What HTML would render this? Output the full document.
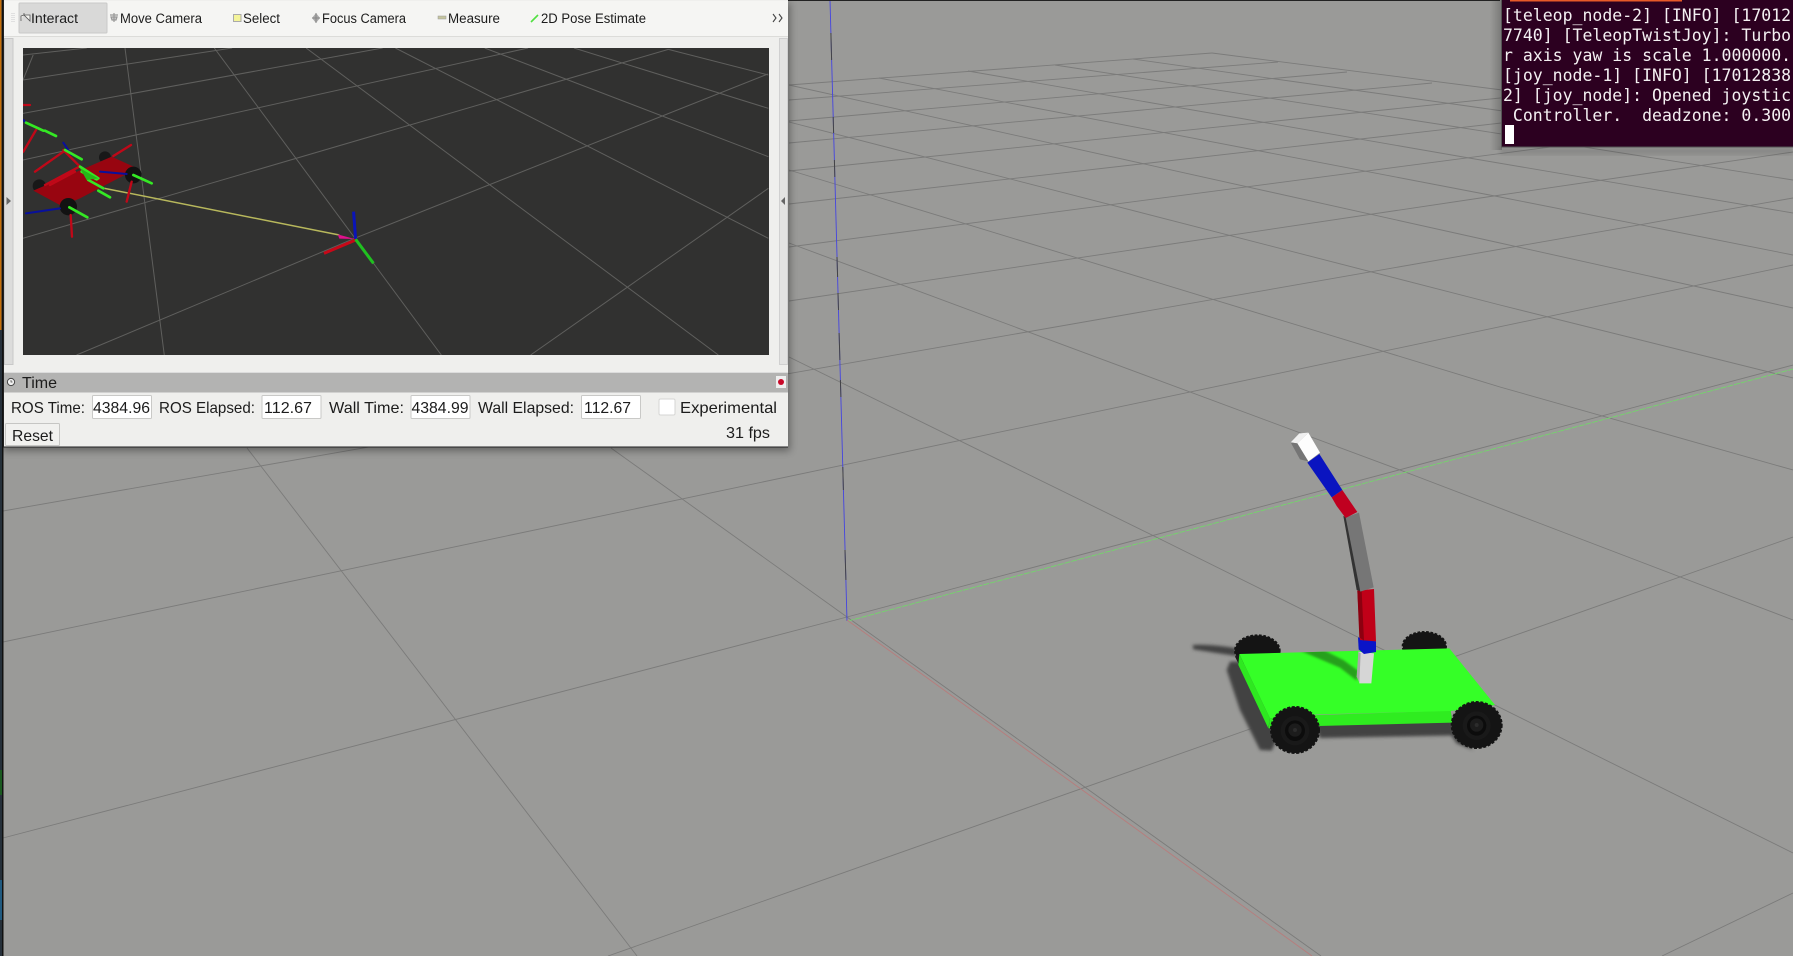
<!DOCTYPE html>
<html><head><meta charset="utf-8"><style>
html,body{margin:0;padding:0;background:#9a9a98;overflow:hidden}
svg{display:block;position:absolute;left:0;top:0}
.u{font-family:"Liberation Sans",sans-serif;fill:#1c1c1c}
.t{font-size:13.5px}.m{font-size:16px}
.c{font-family:"DejaVu Sans Mono","Liberation Mono",monospace;font-size:16.5px;fill:#f4f0f2}
</style></head><body>
<svg width="1793" height="956" viewBox="0 0 1793 956" xmlns="http://www.w3.org/2000/svg">
<defs>
<filter id="b3"><feGaussianBlur stdDeviation="5"/></filter>
<filter id="b1"><feGaussianBlur stdDeviation="2"/></filter>
<filter id="b05"><feGaussianBlur stdDeviation="3"/></filter>
<filter id="ws" x="-5%" y="-5%" width="110%" height="110%"><feGaussianBlur stdDeviation="4"/></filter>
<clipPath id="vp"><rect x="23" y="48" width="746" height="307"/></clipPath>
<clipPath id="green"><path d="M178 762L808 745L945 915L812 933L415 943L270 955Z"/></clipPath>
<linearGradient id="tsh" x1="0" x2="1" y1="0" y2="0"><stop offset="0" stop-color="#000" stop-opacity="0"/><stop offset="1" stop-color="#000" stop-opacity=".22"/></linearGradient>
</defs>
<rect width="1793" height="956" fill="#9a9a98"/>
<!-- ground grid -->
<g stroke="#7b7b7a" stroke-width=".9" fill="none">
<path d="M789 85L1212 53"/><path d="M789 100L1278 62"/><path d="M789 121L1347 72"/><path d="M789 143L1432 83"/>
<path d="M789 171L1510 97"/><path d="M789 204L1510 122"/><path d="M789 247L1550 147"/>
<path d="M789 301L1487 197L1793 152"/><path d="M3 511L1793 198"/><path d="M3 642L1793 265"/>
<path d="M3 838L847 617L1793 365"/><path d="M608 956L1793 537"/><path d="M1662 956L1793 893"/>
<path d="M1212 53L1510 91"/><path d="M1133 59L1510 112"/><path d="M1055 65L1457 127L1793 180"/>
<path d="M968 71L1469 158L1793 213"/><path d="M879 78L1500 197L1793 255"/><path d="M789 85L1500 243L1793 308"/>
<path d="M789 122L1500 305L1793 378"/><path d="M789 170L1500 387L1793 470"/><path d="M789 243L1400 470L1793 620"/>
<path d="M789 357L1154 536L1793 853"/><path d="M611 448L847 617L1321 956"/><path d="M247 448L637 956"/>
</g>
<!-- axes -->
<path d="M830 0L847 621" stroke="#4444e0" stroke-width=".9" fill="none"/>
<path d="M830.9 33L831.6 60M833.2 117L833.6 133M834.4 160L834.8 177M837 257L837.6 277M838 293L838.5 310M839.1 333L839.9 360M840.4 380L840.9 397M842.8 467L843.4 490M845 550L845.9 580" stroke="#444" stroke-width="1" fill="none"/>
<path d="M848 621L1793 369" stroke="#74d46c" stroke-width=".9" fill="none" stroke-dasharray="6 1"/>
<path d="M847 620L1312 956" stroke="#b87c7c" stroke-width=".9" fill="none"/>
<!-- robot -->
<g transform="translate(1180 400) scale(.33333)">
<g filter="url(#b3)" fill="#424242">
<path d="M38 735Q90 732 170 745L170 768Q90 756 40 748Z"/>
<path d="M150 785L260 785L300 1000L275 1052L240 1050L180 930L140 810Z"/>
<path d="M400 960L815 950L825 1006L420 1014Z"/>
<path d="M790 970L880 1050L830 1030Z"/>
</g>
<ellipse cx="232" cy="752" rx="67" ry="46" fill="#141414" stroke="#141414" stroke-width="6" stroke-dasharray="8 5"/>
<ellipse cx="733" cy="738" rx="65" ry="42" fill="#141414" stroke="#141414" stroke-width="6" stroke-dasharray="8 5"/>
<path d="M165 770L180 800L195 830L185 760Z" fill="#1c1c1c"/>
<path d="M178 762L175 795L265 985L270 955Z" fill="#2ee820"/>
<path d="M270 955L415 945L812 932L818 968L415 978L266 985Z" fill="#2fec20"/>
<path d="M178 762L808 745L945 915L812 933L415 943L270 955Z" fill="#35ff27"/>
<g clip-path="url(#green)"><path d="M360 752L430 750L490 780L534 812L530 842L480 803Z" fill="#26a01a" filter="url(#b05)"/></g>
<!-- mast -->
<path d="M535 755L582 760L574 850L538 850Z" fill="#d6d6d6"/>
<path d="M535 755L542 760L538 848L530 830Z" fill="#a8a8a8"/>
<path d="M534 712L588 724L588 756L552 762L536 748Z" fill="#0a14c8"/>
<path d="M532 572L582 567L588 724L540 720Z" fill="#c00018"/>
<path d="M532 572L545 572L552 722L538 712Z" fill="#8c0010"/>
<path d="M490 348L500 352L545 575L530 570Z" fill="#333"/>
<path d="M497 352L537 338L581 562L541 575Z" fill="#767676"/>
<path d="M455 292L487 270L532 336L497 354L470 318Z" fill="#c00020"/>
<path d="M382 188L418 162L487 270L455 292Z" fill="#0a14c0"/>
<path d="M352 130L385 98L420 158L385 184Z" fill="#fdfdfd"/>
<path d="M332 127L358 100L385 98L352 130Z" fill="#f0f0f0"/>
<path d="M332 127L352 130L385 184L360 178Z" fill="#757575"/>
<!-- front wheels -->
<g>
<ellipse cx="345" cy="990" rx="72" ry="69" fill="#141414" stroke="#141414" stroke-width="6" stroke-dasharray="9 5"/>
<ellipse cx="345" cy="992" rx="43" ry="44" fill="#191919"/><ellipse cx="345" cy="992" rx="30" ry="31" fill="#0c0c0c"/><circle cx="345" cy="990" r="20" fill="#1c1c1c"/><circle cx="345" cy="990" r="6" fill="#2c2c2c"/>
<ellipse cx="890" cy="975" rx="75" ry="69" fill="#141414" stroke="#141414" stroke-width="6" stroke-dasharray="9 5"/>
<ellipse cx="890" cy="977" rx="42" ry="43" fill="#191919"/><ellipse cx="890" cy="977" rx="29" ry="30" fill="#0c0c0c"/><circle cx="890" cy="975" r="20" fill="#1c1c1c"/><circle cx="890" cy="975" r="6" fill="#2c2c2c"/>
</g>
</g>
<!-- terminal -->
<rect x="1490" y="0" width="12" height="150" fill="url(#tsh)"/>
<rect x="1500" y="147" width="293" height="8" fill="#000" opacity=".1" filter="url(#b1)"/>
<rect x="1502" y="0" width="291" height="147" fill="#2c0020"/>
<path d="M1501.5 0V147H1793" stroke="#555" fill="none"/>
<rect x="1510" y="0" width="172" height="1.5" fill="#e85a28"/>
<text class="c" x="1503" y="21" xml:space="preserve">[teleop_node-2] [INFO] [17012</text>
<text class="c" x="1503" y="41" xml:space="preserve">7740] [TeleopTwistJoy]: Turbo</text>
<text class="c" x="1503" y="61" xml:space="preserve">r axis yaw is scale 1.000000.</text>
<text class="c" x="1503" y="81" xml:space="preserve">[joy_node-1] [INFO] [17012838</text>
<text class="c" x="1503" y="101" xml:space="preserve">2] [joy_node]: Opened joystic</text>
<text class="c" x="1503" y="121" xml:space="preserve"> Controller.  deadzone: 0.300</text>
<rect x="1505" y="125" width="9" height="19" fill="#fff"/>
<!-- window -->
<rect x="0" y="0" width="1500" height="1" fill="#222"/>
<rect x="3" y="3" width="787" height="448" fill="#000" opacity=".35" filter="url(#ws)"/>
<rect x="3" y="0" width="785" height="447" fill="#efefed"/>
<rect x="3" y="446.5" width="785" height="1" fill="#222"/>
<rect x="3" y="0" width="1" height="447" fill="#333"/>
<!-- toolbar -->
<rect x="4" y="1" width="784" height="35" fill="#f5f5f3"/>
<rect x="4" y="36" width="784" height="1" fill="#dcdcd9"/>
<rect x="19" y="3" width="88" height="30" rx="1" fill="#d9d9d8" stroke="#c9c9c8"/>
<path d="M12 13V22M14 13V22" stroke="#ccc" stroke-dasharray="1 1"/>
<path d="M21 21V16L24 15V13M24 15H30V21Z" fill="#f4f4f0" stroke="#555" stroke-width=".8"/>
<path d="M110 15H118M114 13V22M111 17L117 17L116 20H112Z" stroke="#999" stroke-width="1.2" fill="#ccc"/>
<rect x="233.5" y="14.5" width="7.5" height="7" fill="#f4f49a" stroke="#aaa"/>
<path d="M316 13L320 18L316 23L312 18Z" fill="#aaa"/><path d="M312 18H320M316 13V23" stroke="#888"/>
<rect x="438" y="16" width="8" height="3" fill="#c5c59e" stroke="#999" stroke-width=".5"/>
<path d="M531 22L538 15" stroke="#50e040" stroke-width="1.6"/>
<path d="M773 14L776 18L773 22M779 14L782 18L779 22" stroke="#444" fill="none" stroke-width="1.1"/>
<g class="u t">
<text x="31" y="23" textLength="47" lengthAdjust="spacingAndGlyphs">Interact</text>
<text x="120" y="23" textLength="82" lengthAdjust="spacingAndGlyphs">Move Camera</text>
<text x="243" y="23" textLength="37" lengthAdjust="spacingAndGlyphs">Select</text>
<text x="322" y="23" textLength="84" lengthAdjust="spacingAndGlyphs">Focus Camera</text>
<text x="448" y="23" textLength="52" lengthAdjust="spacingAndGlyphs">Measure</text>
<text x="541" y="23" textLength="105" lengthAdjust="spacingAndGlyphs">2D Pose Estimate</text>
</g>
<!-- side strips -->
<rect x="4.5" y="38.5" width="8.5" height="326" fill="#dcdcdb" stroke="#c8c8c8"/>
<rect x="779.5" y="38.5" width="8" height="326" fill="#e3e3e2" stroke="#d0d0d0"/>
<path d="M6.5 197L11 201L6.5 205Z" fill="#666"/><path d="M785 197L781 201L785 205Z" fill="#666"/>
<!-- viewport -->
<rect x="23" y="48" width="746" height="307" fill="#313130"/>
<g clip-path="url(#vp)">
<g transform="scale(.5102 .33333)" fill="none" stroke="#5f5f5d" stroke-width="1">
<path vector-effect="non-scaling-stroke" d="M45 165L170 144M65 165L45 240M45 240L455 144M45 340L750 144M45 480L1035 144M45 715L1310 148M150 1065L695 715L1505 222M1040 1065L1506 565"/>
<path vector-effect="non-scaling-stroke" d="M245 144L322 1065M420 144L865 1065M600 144L1408 1065M775 144L1506 715M950 144L1506 470M1125 144L1506 325M1310 148L1506 225"/>
<path vector-effect="non-scaling-stroke" d="M205 565L665 705" stroke="#b8b85c" stroke-width="1.5"/>
<path d="M662 703L695 717L665 716Z" fill="#e0108c" stroke="none"/>
<path vector-effect="non-scaling-stroke" d="M693 635L697 717" stroke="#0a14b8" stroke-width="3"/>
<path vector-effect="non-scaling-stroke" d="M697 720L635 760" stroke="#c80818" stroke-width="3"/>
<path vector-effect="non-scaling-stroke" d="M697 718L732 790" stroke="#20c020" stroke-width="3"/>
</g>
<g transform="translate(0 100) scale(.33333)" fill="none" stroke-linecap="round">
<circle cx="118" cy="258" r="20" fill="#181818"/><circle cx="315" cy="172" r="18" fill="#181818"/>
<path d="M100 272L335 170L412 205L240 295L185 318Z" fill="#980510"/>
<circle cx="205" cy="320" r="26" fill="#121212"/><circle cx="400" cy="225" r="25" fill="#121212"/>
<g stroke="#c00818" stroke-width="7">
<path d="M108 90L70 155M70 15L90 15M190 155L105 215M393 135L340 168M238 200L135 255M190 150L245 205M212 345L216 410M395 245L380 305M225 215L150 255"/>
</g>
<g stroke="#08109c" stroke-width="6">
<path d="M78 340L180 325M300 215L380 222M190 128L215 165M70 60L78 68"/>
</g>
<g stroke="#34e824" stroke-width="8">
<path d="M78 68L130 92M135 92L168 108M195 150L245 178M240 200L295 235M245 215L290 238M265 240L310 265M295 272L330 292M208 322L262 352M400 225L455 250"/>
</g>
<path d="M240 205L260 240L295 235Z" fill="#26b818"/>
</g>
</g>
<!-- Time panel -->
<rect x="4" y="373" width="784" height="19.5" fill="#b3b3b2"/>
<rect x="4" y="372" width="784" height="1" fill="#dcdcdc"/>
<circle cx="11" cy="382" r="3.6" fill="#f2f2f2" stroke="#444"/><path d="M11 380V382H12.5" stroke="#444" fill="none" stroke-width=".7"/>
<rect x="776" y="376" width="10" height="12" fill="#eee"/><circle cx="781" cy="382" r="3" fill="#c80828"/>
<g class="u m">
<text x="22" y="388" textLength="35" lengthAdjust="spacingAndGlyphs">Time</text>
<text x="11" y="413" textLength="74" lengthAdjust="spacingAndGlyphs">ROS Time:</text>
<text x="159" y="413" textLength="96" lengthAdjust="spacingAndGlyphs">ROS Elapsed:</text>
<text x="329" y="413" textLength="75" lengthAdjust="spacingAndGlyphs">Wall Time:</text>
<text x="478" y="413" textLength="96" lengthAdjust="spacingAndGlyphs">Wall Elapsed:</text>
<text x="680" y="413" textLength="97" lengthAdjust="spacingAndGlyphs">Experimental</text>
<text x="726" y="438" textLength="44" lengthAdjust="spacingAndGlyphs">31 fps</text>
</g>
<g fill="#fff" stroke="#c9c9c7">
<rect x="92.5" y="395.5" width="59" height="23" rx="1"/><rect x="262" y="395.5" width="59" height="23" rx="1"/>
<rect x="411" y="395.5" width="59" height="23" rx="1"/><rect x="581.5" y="395.5" width="59" height="23" rx="1"/>
<rect x="659" y="399" width="16" height="16" rx="1.5" stroke="#d6d6d4"/>
</g>
<rect x="5.5" y="423.5" width="54" height="22" rx="1" fill="#f1f1ef" stroke="#c6c6c4"/>
<g class="u m">
<text x="93" y="413" textLength="57" lengthAdjust="spacingAndGlyphs">4384.96</text>
<text x="264" y="413" textLength="48" lengthAdjust="spacingAndGlyphs">112.67</text>
<text x="411.5" y="413" textLength="57" lengthAdjust="spacingAndGlyphs">4384.99</text>
<text x="584" y="413" textLength="47" lengthAdjust="spacingAndGlyphs">112.67</text>
<text x="12" y="441" textLength="41" lengthAdjust="spacingAndGlyphs">Reset</text>
</g>
<!-- left edge -->
<rect x="0" y="0" width="2" height="956" fill="#26303a"/>
<rect x="0" y="0" width="1.5" height="330" fill="#c8700a"/>
<rect x="2" y="0" width="1.5" height="956" fill="#111"/>
<rect x="0" y="770" width="2" height="25" fill="#1a5a20"/>
<rect x="0" y="880" width="2" height="40" fill="#205a80"/>
</svg>
</body></html>
